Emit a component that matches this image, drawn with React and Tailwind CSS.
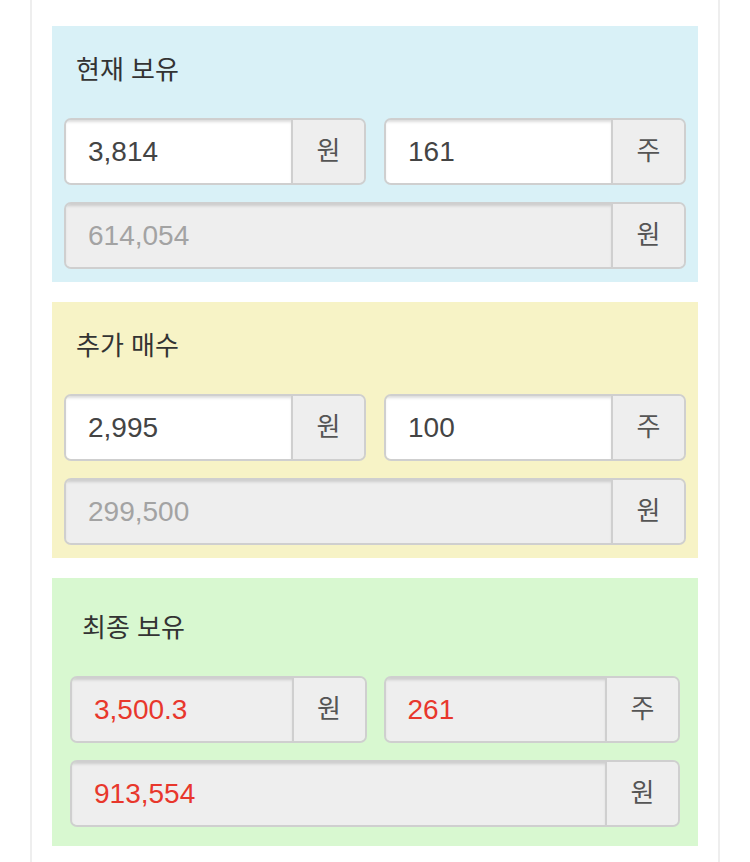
import React from 'react';

const font = { fontFamily: '"Liberation Sans", "Noto Sans CJK KR", sans-serif' };

// one input with its unit on the right
const Field = ({ value, unit, tone = 'edit' }) => {
    const box = tone === 'edit' ? 'bg-white' : 'bg-[#eeeeee]';
    const text =
        tone === 'edit' ? 'text-[#444]' : tone === 'muted' ? 'text-[#a3a3a3]' : 'text-[#e8372c]';
    return (
        <div className="flex h-[67px] rounded-[7px] border-2 border-[#cfcfcf] overflow-hidden">
            <div className={`flex-1 flex items-center pl-[22px] shadow-[inset_0_3px_3px_-1px_rgba(0,0,0,0.14)] ${box}`}>
                <span className={`text-[28px] ${text}`}>{value}</span>
            </div>
            <div className="w-[73px] flex items-center justify-center border-l-2 border-[#cfcfcf] bg-[#eeeeee] text-[26px] text-[#555]">
                {unit}
            </div>
        </div>
    );
};

const Panel = ({ title, bg, pad, gap, row, total, tone }) => (
    <div className={`${bg} ${pad}`}>
        <div className="h-[64px] mb-4 flex items-center pl-3 text-[26px] text-[#333]">{title}</div>
        <div className={`grid grid-cols-2 ${gap}`}>
            <Field value={row[0]} unit="원" tone={tone} />
            <Field value={row[1]} unit="주" tone={tone} />
        </div>
        <div className="mt-[17px]">
            <Field value={total} unit="원" tone={tone === 'edit' ? 'muted' : tone} />
        </div>
    </div>
);

export default function App() {
    return (
        <div className="w-[750px] h-[862px] overflow-hidden bg-white" style={font}>
            <div className="mx-[30px] min-h-[862px] border-x-2 border-[#eeeeee] px-5 pt-[26px] flex flex-col gap-5">
                <Panel title="현재 보유" bg="bg-[#d9f1f7]" pad="p-3 pb-[13px]" gap="gap-[18px]" row={['3,814', '161']} total="614,054" tone="edit" />
                <Panel title="추가 매수" bg="bg-[#f7f3c6]" pad="p-3 pb-[13px]" gap="gap-[18px]" row={['2,995', '100']} total="299,500" tone="edit" />
                <Panel title="최종 보유" bg="bg-[#d8f8d0]" pad="p-[18px] pb-[19px]" gap="gap-[17px]" row={['3,500.3', '261']} total="913,554" tone="red" />
            </div>
        </div>
    );
}
